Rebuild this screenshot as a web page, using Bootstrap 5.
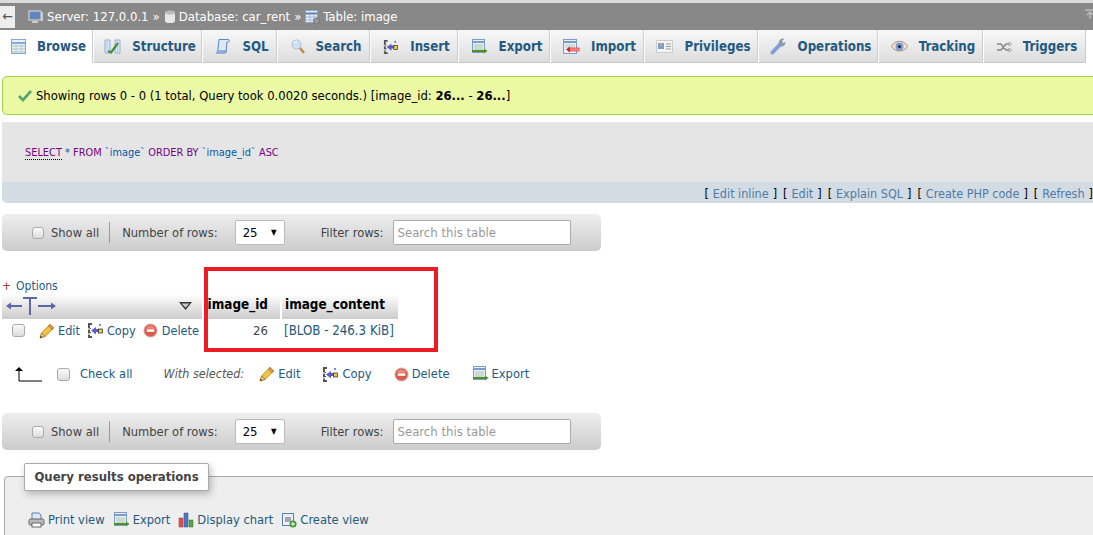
<!DOCTYPE html>
<html lang="en">
<head>
  <meta charset="UTF-8">
  <title>phpMyAdmin - image</title>
  <link href="https://cdn.jsdelivr.net/npm/bootstrap@5.3.0/dist/css/bootstrap.min.css" rel="stylesheet">
  <style>
    html, body { height: 535px; overflow: hidden; }
    body { font-family: "DejaVu Sans Condensed", "DejaVu Sans", sans-serif; font-size: 13px; color: #444; background: #fff; width: 1093px; position: relative; }
    a { color: #235a81; text-decoration: none; }
    .top-strip { height: 3px; background: #dcdcdc; }
    .crumbs { height: 27px; background: #888; color: #fff; gap: 3px; white-space: nowrap; font-size: 13px; }
    .back-box { width: 15px; height: 22px; background: #eee; color: #555; font-size: 14px; line-height: 20px; text-align: center; margin-right: 10px; }
    .crumbs svg { flex: none; }
    .crumb-sep { margin: 0 1px; }
    .tabbar { height: 33px; white-space: nowrap; width: 1200px; }
    .pma-tab { height: 33px; flex: none; gap: 11px; padding-left: 4px; justify-content: center; font-weight: 700; font-size: 13.2px; color: #235a81; background: linear-gradient(#f8f8f8, #dcdcdc); border-right: 1px solid #fff; box-shadow: inset -1px 0 #ccc, inset 0 -1px #c8c8c8; }
    .pma-tab.on { background: #fff; box-shadow: inset -1px 0 #ccc; }
    .t-1 { width: 94px; } .t-2 { width: 109px; } .t-3 { width: 75px; } .t-4 { width: 93px; }
    .t-5 { width: 88px; } .t-6 { width: 92px; } .t-7 { width: 94px; } .t-8 { width: 114px; }
    .t-9 { width: 120px; } .t-10 { width: 105px; } .t-11 { width: 103px; }
    .ok-msg { margin: 13px 0 0 2px; width: 1110px; height: 39px; background: #ebf8a4; border: 1px solid #a2d246; border-radius: 5px; color: #000; padding-left: 14px; gap: 4px; white-space: nowrap; font-size: 12.9px; }
    .sql-box { margin: 7px 0 0 2px; width: 1110px; height: 81px; border-radius: 0 0 0 5px; overflow: hidden; }
    .sql-code { height: 60px; background: #e5e5e5; padding: 2px 0 0 23px; font-size: 10.9px; color: #444; }
    .kw { color: #708; }
    .kw-u { color: #708; border-bottom: 1px dotted #000; }
    .sym { color: #05a; }
    .sql-links { height: 21px; background: #d3dce3; padding: 3px 19px 0 0; color: #000; white-space: nowrap; font-size: 12.5px; }
    .sql-links a { color: #4f7aa8; margin: 0 4px; }
    .sql-links span { margin-left: 6px; }
    .rows-nav { margin-left: 2px; width: 599px; height: 37px; border-radius: 5px; background: linear-gradient(#eee, #ccc); padding-left: 30px; white-space: nowrap; font-size: 12.8px; }
    .rows-nav.first { margin-top: 11px; }
    .rows-nav.second { margin-top: 27px; }
    .box-check { width: 12px; height: 12px; border: 1px solid #aaa; border-radius: 3px; background: linear-gradient(#fafafa, #ddd); flex: none; display: inline-block; }
    .box-check.big { width: 13px; height: 13px; }
    .rows-nav .box-check { margin-right: 7px; }
    .nav-rule { width: 1px; height: 21px; background: #999; margin: 0 12px 0 10px; }
    .num-select { width: 50px; height: 25px; background: #fff; border: 1px solid #bbb; border-radius: 2px; margin-left: 17px; padding: 0 7px; color: #000; font-size: 13px; }
    .num-select small { font-size: 8px; }
    .filter-lbl { margin-left: 36px; }
    .filter-box { width: 178px; height: 25px; background: #fff; border: 1px solid #aaa; border-radius: 2px; margin-left: 9px; padding-left: 4px; color: #999; font-size: 13px; }
    .opts { margin: 27px 0 0 2px; line-height: 16px; color: #235a81; font-size: 12px; }
    .opts b { color: #a33; font-weight: 400; margin-right: 5px; }
    .res-head { margin-left: 2px; height: 25px; color: #000; }
    .res-head > div { height: 25px; background: linear-gradient(#fff, #ccc); font-weight: 700; font-size: 13.4px; padding-bottom: 2px; }
    .h-arrows { width: 200px; justify-content: space-between; padding: 0 10px 2px 4px; margin-right: 2px; }
    .h-id { width: 76px; justify-content: flex-end; padding-right: 12px; margin-right: 2px; }
    .h-ct { width: 116px; padding-left: 3px; }
    .res-row { margin-left: 2px; height: 24px; white-space: nowrap; }
    .act-cell { width: 202px; padding-left: 10px; gap: 3px; font-size: 12.6px; }
    .act-cell a { color: #235a81; margin-right: 4px; }
    .act-cell .box-check { margin-right: 11px; }
    .act-cell a.row-last { margin-right: 0; margin-left: 1px; }
    .id-cell { width: 76px; text-align: right; padding-right: 12px; }
    .blob-cell { color: #235a81; padding-left: 4px; font-size: 13.2px; }
    .with-sel { margin: 19px 0 0 14px; height: 24px; white-space: nowrap; font-size: 12.8px; }
    .with-sel a { color: #235a81; }
    .with-sel .box-check { margin: 0 10px 0 15px; }
    .with-sel i { margin: 0 15px 0 31px; color: #555; font-size: 12.5px; }
    .sel-act { gap: 3px; margin-right: 22px; }
    .ops-field { margin: 26px 0 0 4px; width: 1110px; height: 80px; background: #eee; border: 1px solid #aaa; border-radius: 4px 0 0 0; position: relative; padding: 33px 0 0 23px; gap: 8px; white-space: nowrap; font-size: 12.8px; }
    .ops-field a { gap: 3px; color: #235a81; }
    .ops-legend { position: absolute; left: 19px; top: -14px; height: 28px; width: 185px; background: #fff; border: 1px solid #aaa; border-radius: 2px; box-shadow: 2px 3px 7px rgba(0,0,0,.25); font-weight: 700; font-size: 13px; text-align: center; line-height: 26px; color: #444; }
    .red-mark { position: absolute; left: 204px; top: 267px; width: 234px; height: 85px; border: 4px solid #ed1c24; }
    .corner-up { position: absolute; right: -2px; top: 9px; width: 10px; height: 10px; }
  </style>
</head>
<body>
  <svg width="0" height="0" class="position-absolute">
    <symbol id="i-grid" viewBox="0 0 15 15"><rect x=".5" y=".5" width="14" height="14" fill="#eaf1fa" stroke="#86a8d6"/><path d="M1 4h13" stroke="#86a8d6" stroke-width="2"/><path d="M1 7h13M1 10h13M1 13h13" stroke="#a9c4a8"/><path d="M5 4v10M10 4v10" stroke="#b6cbe6"/></symbol>
    <symbol id="i-edit" viewBox="0 0 16 16"><path d="M11 1.500l3.500 3.500-8.500 8.500-3.500-3.500z" fill="#f3c43e" stroke="#b38a2c"/><path d="M11 1.500l3.500 3.500-1.500 1.500-3.500-3.500z" fill="#e8a070" stroke="#a8792a"/><path d="M2.500 10L1 15l5-1.500z" fill="#f3dcb0" stroke="#a8792a"/><path d="M1 15l.8-2.500 1.700 1.700z" fill="#543"/></symbol>
    <symbol id="i-copy" viewBox="0 0 17 17"><path d="M1 1h4v2H3v3h1v1H3v3h1v1H3v3h2v2H1z" fill="#555"/><path d="M1 6h2v2H1zM1 11h2v2H1z" fill="#bbb"/><path d="M4 8.500L9 5v2h3v3H9v2.500z" fill="#5c5cc8"/><rect x="11.500" y="7" width="4" height="4" fill="#f2cc3a" stroke="#222" stroke-width=".7"/><path d="M12 3h2M13 2v2" stroke="#5c5cc8"/></symbol>
    <symbol id="i-del" viewBox="0 0 16 16"><circle cx="8" cy="8" r="7" fill="#dd5b4c" stroke="#d0b8ae"/><path d="M3 6a5.500 5.500 0 0 1 10 0z" fill="#ec8a7c"/><rect x="4" y="6.800" width="8" height="2.600" fill="#fff"/></symbol>
    <symbol id="i-export" viewBox="0 0 17 16"><rect x="1.500" y=".5" width="12" height="13" fill="#eaf1fa" stroke="#7c9cc8"/><path d="M2 3h11" stroke="#7c9cc8" stroke-width="2"/><path d="M3 6h9M3 8h9M3 10h9" stroke="#a9c4a8"/><rect x="1" y="11" width="13" height="2" fill="#4c8f2c"/><path d="M13 9.500l3.500 2.500-3.500 2.500z" fill="#4c8f2c"/></symbol>
  </svg>

  <div class="top-strip"></div>
  <div class="crumbs d-flex align-items-center">
    <div class="back-box">←</div>
    <svg width="16" height="16" viewBox="0 0 16 16"><rect x="1" y="2" width="12" height="9" fill="#5f86bc" stroke="#ddd"/><rect x="4" y="12" width="6" height="2" fill="#ccc"/><rect x="13" y="3" width="2" height="9" fill="#ccc"/></svg>
    <span>Server: 127.0.0.1</span><span class="crumb-sep">»</span>
    <svg width="12" height="16" viewBox="0 0 12 16"><rect x="1" y="2" width="10" height="12" rx="3" fill="#e8e8e8"/><ellipse cx="6" cy="3.500" rx="5" ry="2" fill="#bbb"/></svg>
    <span>Database: car_rent</span><span class="crumb-sep">»</span>
    <svg width="15" height="16" viewBox="0 0 15 16"><rect x=".5" y="1.500" width="12" height="12" fill="#eaf1fa" stroke="#86a8d6"/><path d="M.5 4.500h12" stroke="#5b7fb0" stroke-width="2"/><path d="M.5 8h12M.5 11h12M5 5v8M9 5v8" stroke="#9db6d8"/><circle cx="11.500" cy="12" r="3" fill="#999" stroke="#777"/></svg>
    <span>Table: image</span>
  </div>
  <svg class="corner-up" viewBox="0 0 10 10"><path d="M0 1h10M5 10V3M2 6l3-3 3 3" fill="none" stroke="#bbb" stroke-width="1.500"/></svg>

  <div class="tabbar d-flex">
    <a class="pma-tab on t-1 d-flex align-items-center" href="#"><svg width="15" height="15"><use href="#i-grid"/></svg>Browse</a>
    <a class="pma-tab t-2 d-flex align-items-center" href="#"><svg width="17" height="15" viewBox="0 0 17 15"><path d="M1 1h5v13H1zM11 1h5v13h-5z" fill="#dbe7f6" stroke="#8fb0da"/><path d="M3 14V1M13.500 14V1" stroke="#b6cbe6"/><path d="M4 12l3 1.500L14 4" fill="none" stroke="#4a8f3a" stroke-width="2.200"/></svg>Structure</a>
    <a class="pma-tab t-3 d-flex align-items-center" href="#"><svg width="16" height="17" viewBox="0 0 16 17"><path d="M4 1.500h9c1.500 0 2 2 .5 2.500H12L11 14.500H1.500c.8-.6 1.300-1.500 1.400-2.500z" fill="#dce8f8" stroke="#5b86c4"/><path d="M1 15h9c1 0 1-1 .8-2H3" fill="#b8cff0" stroke="#5b86c4"/></svg>SQL</a>
    <a class="pma-tab t-4 d-flex align-items-center" href="#"><svg width="14" height="15" viewBox="0 0 14 15"><circle cx="5.500" cy="5.500" r="4.500" fill="#cfe3f7" stroke="#a9bdd4"/><path d="M3 4a3 3 0 0 1 3-2" stroke="#fff" fill="none"/><path d="M9 9l4 5" stroke="#c08a50" stroke-width="2.500"/></svg>Search</a>
    <a class="pma-tab t-5 d-flex align-items-center" href="#"><svg width="16" height="16"><use href="#i-copy"/></svg>Insert</a>
    <a class="pma-tab t-6 d-flex align-items-center" href="#"><svg width="17" height="16"><use href="#i-export"/></svg>Export</a>
    <a class="pma-tab t-7 d-flex align-items-center" href="#"><svg width="17" height="16" viewBox="0 0 17 16"><rect x=".5" y=".5" width="13" height="14" fill="#eaf1fa" stroke="#7c9cc8"/><path d="M1 3h12" stroke="#7c9cc8" stroke-width="2"/><path d="M2 6h10M2 8h10" stroke="#b5c9c0"/><rect x="6" y="9" width="10" height="3" fill="#f88" stroke="#e33" stroke-width=".7"/><path d="M7 7.500v6L3 10.500z" fill="#d92020"/></svg>Import</a>
    <a class="pma-tab t-8 d-flex align-items-center" href="#"><svg width="17" height="13" viewBox="0 0 17 13"><rect x=".5" y=".5" width="16" height="12" fill="#f4f4f4" stroke="#ccc"/><rect x="2" y="3" width="6" height="6" fill="#6fa0e0"/><rect x="4" y="3" width="2" height="3" fill="#e8a060"/><path d="M10 4h5M10 6.500h5M10 9h5" stroke="#999"/></svg>Privileges</a>
    <a class="pma-tab t-9 d-flex align-items-center" href="#"><svg width="17" height="17" viewBox="0 0 17 17"><path d="M2.500 14.500L10 6.500" stroke="#7f9fdc" stroke-width="4" stroke-linecap="round"/><path d="M9 6a4 4 0 0 1 5.500-5l-2.500 2 1 2 2.500-1A4 4 0 0 1 11 8.500z" fill="#8a9ab0"/></svg>Operations</a>
    <a class="pma-tab t-10 d-flex align-items-center" href="#"><svg width="17" height="13" viewBox="0 0 17 13"><path d="M.5 6.500C4-.5 13-.5 16.500 6.500 13 12.500 4 12.500.5 6.500z" fill="#f4e4d4" stroke="#b08a68"/><circle cx="8.500" cy="6.500" r="4" fill="#7a9ad4"/><circle cx="8.500" cy="6.500" r="1.500" fill="#123"/></svg>Tracking</a>
    <a class="pma-tab t-11 d-flex align-items-center" href="#"><svg width="15" height="12" viewBox="0 0 15 12"><path d="M0 3h4l5 6h4M0 9h4l5-6h4" fill="none" stroke="#888" stroke-width="1.500"/><path d="M12 1l3 2-3 2zM12 7l3 2-3 2z" fill="#ddd" stroke="#888" stroke-width=".5"/></svg>Triggers</a>
  </div>

  <div class="ok-msg d-flex align-items-center">
    <svg width="15" height="14" viewBox="0 0 15 14"><path d="M1 8l2-2 3 3 7-8 2 2-9 10z" fill="#5aa56a"/></svg>
    <span>Showing rows 0 - 0 (1 total, Query took 0.0020 seconds.) [image_id: <b>26...</b> - <b>26...</b>]</span>
  </div>

  <div class="sql-box">
    <div class="sql-code d-flex align-items-center">
      <span><span class="kw-u">SELECT</span> <span class="sym">*</span> <span class="kw">FROM</span> <span class="sym">`image`</span> <span class="kw">ORDER BY</span> <span class="sym">`image_id`</span> <span class="kw">ASC</span></span>
    </div>
    <div class="sql-links d-flex align-items-center justify-content-end">
      [<a href="#">Edit inline</a>]<span>[</span><a href="#">Edit</a>]<span>[</span><a href="#">Explain SQL</a>]<span>[</span><a href="#">Create PHP code</a>]<span>[</span><a href="#">Refresh</a>]
    </div>
  </div>

  <div class="rows-nav first d-flex align-items-center">
    <span class="box-check"></span><span>Show all</span><span class="nav-rule"></span><span>Number of rows:</span>
    <div class="num-select d-flex align-items-center justify-content-between"><span>25</span><small>▼</small></div>
    <span class="filter-lbl">Filter rows:</span><div class="filter-box d-flex align-items-center">Search this table</div>
  </div>

  <div class="opts"><b>+</b>Options</div>
  <div class="res-head d-flex">
    <div class="h-arrows d-flex align-items-center">
      <svg width="50" height="22" viewBox="0 0 50 22"><path d="M16 11H2M32 11h15M17 3h14M24 3v17" fill="none" stroke="#5a68a8" stroke-width="2"/><path d="M0 11l5-3.500v7zM50 11l-5-3.500v7z" fill="#5a68a8"/></svg>
      <svg width="13" height="8" viewBox="0 0 15 9"><path d="M0 0h15L7.500 9z" fill="#333"/><path d="M3 1.500h9L7.500 6.500z" fill="#ccc"/></svg>
    </div>
    <div class="h-id d-flex align-items-center">image_id</div>
    <div class="h-ct d-flex align-items-center">image_content</div>
  </div>
  <div class="res-row d-flex align-items-center">
    <div class="act-cell d-flex align-items-center">
      <span class="box-check big"></span>
      <svg width="16" height="16"><use href="#i-edit"/></svg><a href="#">Edit</a>
      <svg width="17" height="17"><use href="#i-copy"/></svg><a href="#">Copy</a>
      <svg width="15" height="15"><use href="#i-del"/></svg><a class="row-last" href="#">Delete</a>
    </div>
    <div class="id-cell">26</div>
    <div class="blob-cell">[BLOB - 246.3 KiB]</div>
  </div>

  <div class="with-sel d-flex align-items-center">
    <svg width="28" height="16" viewBox="0 0 28 16"><path d="M5 3v12h23" fill="none" stroke="#000"/><path d="M1 5l4-4 4 4z" fill="#000"/></svg>
    <span class="box-check big"></span><a href="#">Check all</a>
    <i>With selected:</i>
    <a class="sel-act d-flex align-items-center" href="#"><svg width="16" height="16"><use href="#i-edit"/></svg>Edit</a>
    <a class="sel-act d-flex align-items-center" href="#"><svg width="17" height="17"><use href="#i-copy"/></svg>Copy</a>
    <a class="sel-act d-flex align-items-center" href="#"><svg width="15" height="15"><use href="#i-del"/></svg>Delete</a>
    <a class="sel-act d-flex align-items-center" href="#"><svg width="17" height="16"><use href="#i-export"/></svg>Export</a>
  </div>

  <div class="rows-nav second d-flex align-items-center">
    <span class="box-check"></span><span>Show all</span><span class="nav-rule"></span><span>Number of rows:</span>
    <div class="num-select d-flex align-items-center justify-content-between"><span>25</span><small>▼</small></div>
    <span class="filter-lbl">Filter rows:</span><div class="filter-box d-flex align-items-center">Search this table</div>
  </div>

  <div class="ops-field d-flex align-items-start">
    <div class="ops-legend">Query results operations</div>
    <a class="d-flex align-items-center" href="#"><svg width="17" height="16" viewBox="0 0 17 16"><path d="M4 8V1h7l2 2v5" fill="#dce8f8" stroke="#5b7fb0"/><rect x="1" y="7" width="15" height="6" rx="1.500" fill="#bbb" stroke="#666"/><rect x="4" y="11" width="9" height="4" fill="#fff" stroke="#666"/></svg>Print view</a>
    <a class="d-flex align-items-center" href="#"><svg width="17" height="16"><use href="#i-export"/></svg>Export</a>
    <a class="d-flex align-items-center" href="#"><svg width="16" height="16" viewBox="0 0 16 16"><rect x="1" y="6" width="4" height="9" fill="#e0504f" stroke="#a33" stroke-width=".5"/><rect x="6" y="1" width="4" height="14" fill="#4a78c8" stroke="#357" stroke-width=".5"/><rect x="11" y="8" width="4" height="7" fill="#5aa63c" stroke="#374" stroke-width=".5"/></svg>Display chart</a>
    <a class="d-flex align-items-center" href="#"><svg width="16" height="16" viewBox="0 0 16 16"><rect x="1.500" y="1.500" width="11" height="12" fill="#eaf1fa" stroke="#5b7fb0"/><rect x="4" y="5" width="6" height="5" fill="#a8a4b8"/><circle cx="12" cy="12" r="3.500" fill="#3f9a3a"/><path d="M10 12h4M12 10v4" stroke="#fff"/></svg>Create view</a>
  </div>

  <div class="red-mark"></div>
</body>
</html>
